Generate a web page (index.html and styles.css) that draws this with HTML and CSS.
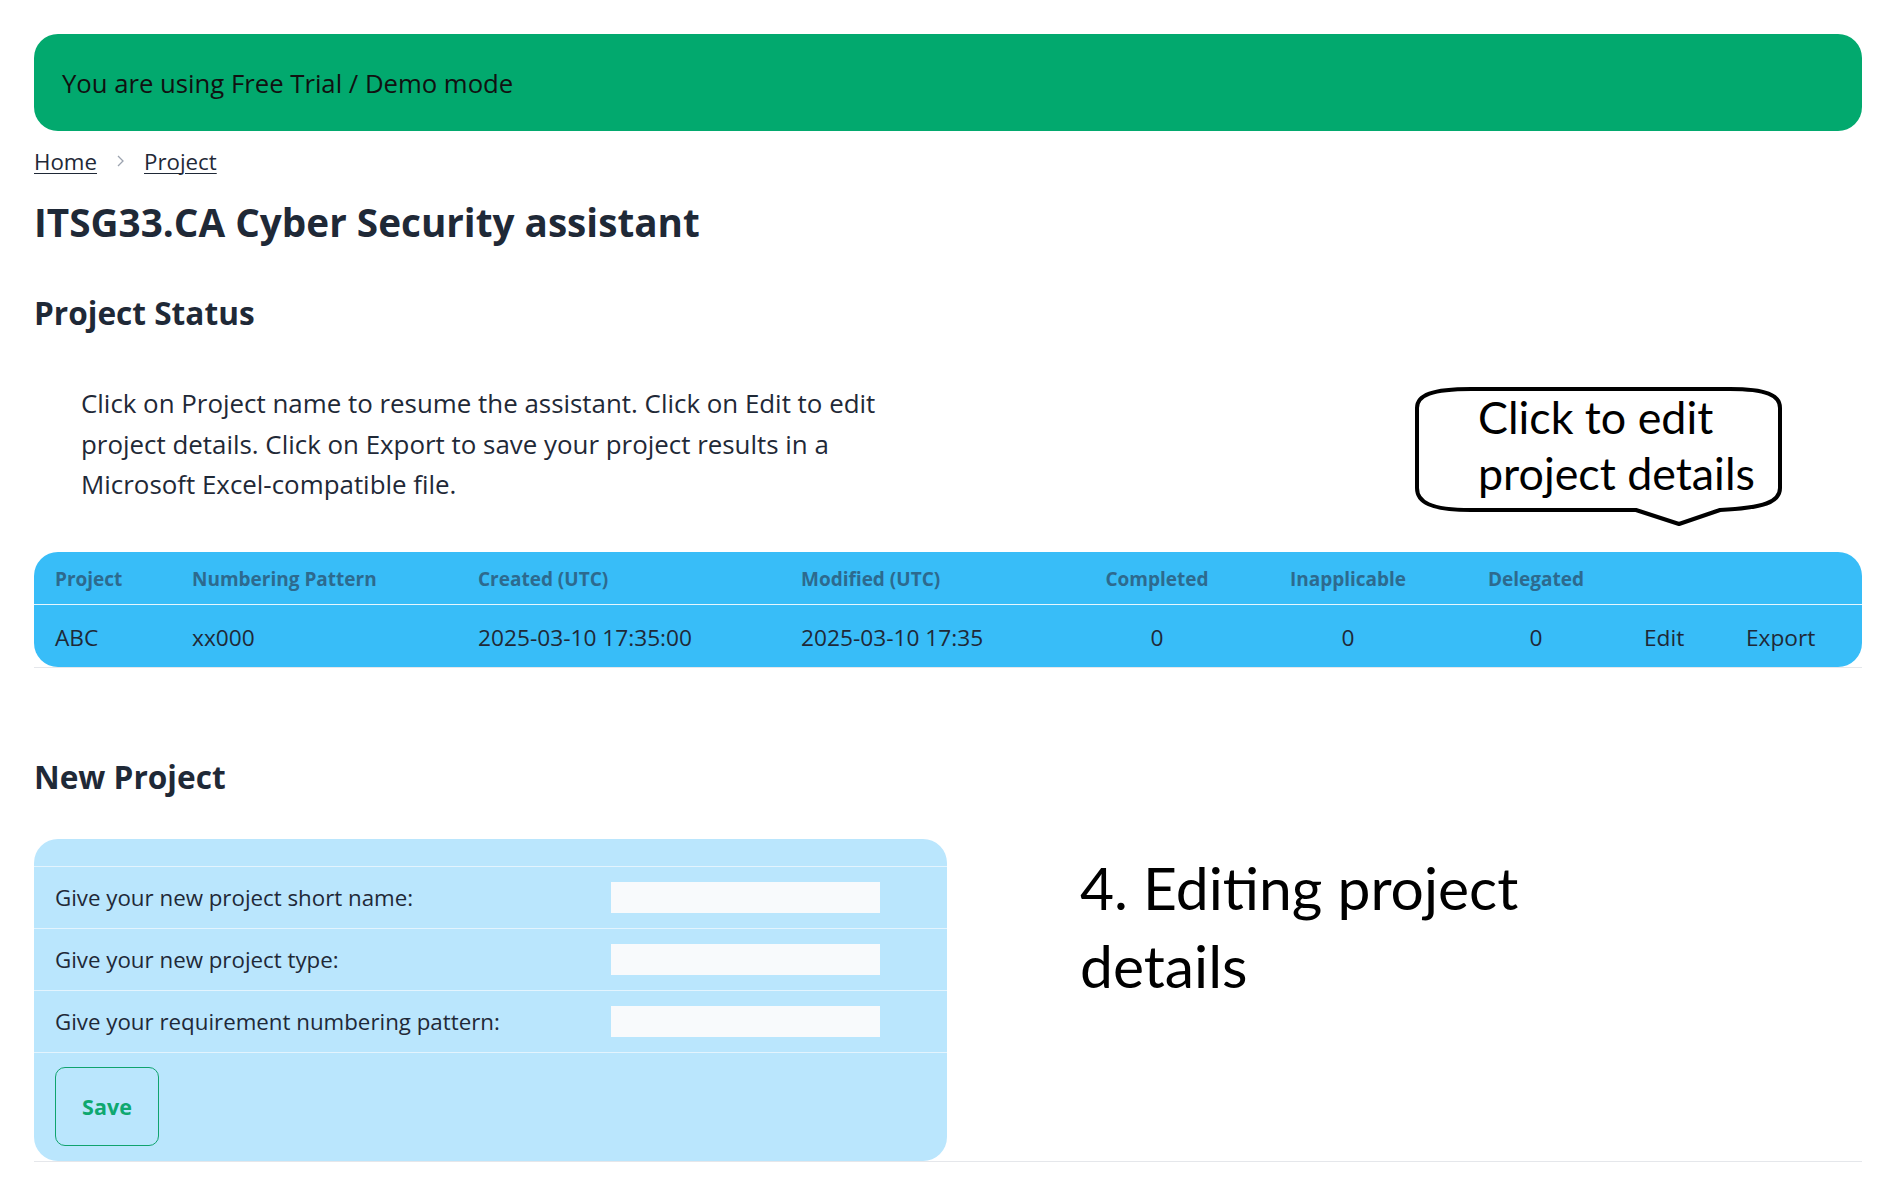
FILE: index.html
```html
<!DOCTYPE html>
<html lang="en">
<head>
<meta charset="utf-8">
<title>ITSG33.CA Cyber Security assistant</title>
<link rel="stylesheet" href="styles.css">
</head>
<body>
<div class="page">
  <div class="banner">You are using Free Trial / Demo mode</div>

  <nav class="crumbs">
    <a href="#">Home</a>
    <svg class="chev" width="10" height="14" viewBox="0 0 10 14"><path d="M3 2 L8 7 L3 12" fill="none" stroke="#9ca3af" stroke-width="1.3"/></svg>
    <a href="#">Project</a>
  </nav>

  <h1 class="title">ITSG33.CA Cyber Security assistant</h1>

  <h2 class="section-title">Project Status</h2>
  <p class="intro">Click on Project name to resume the assistant. Click on Edit to edit project details. Click on Export to save your project results in a Microsoft Excel-compatible file.</p>

  <div class="table-wrap">
    <table class="status">
      <colgroup>
        <col class="c1"><col class="c2"><col class="c3"><col class="c4"><col class="c5"><col class="c6"><col class="c7"><col class="c8"><col class="c9">
      </colgroup>
      <thead>
        <tr>
          <th>Project</th>
          <th>Numbering Pattern</th>
          <th>Created (UTC)</th>
          <th>Modified (UTC)</th>
          <th class="num">Completed</th>
          <th class="num">Inapplicable</th>
          <th class="num">Delegated</th>
          <th class="act"></th>
          <th></th>
        </tr>
      </thead>
      <tbody>
        <tr>
          <td>ABC</td>
          <td>xx000</td>
          <td>2025-03-10 17:35:00</td>
          <td>2025-03-10 17:35</td>
          <td class="num">0</td>
          <td class="num">0</td>
          <td class="num">0</td>
          <td class="act">Edit</td>
          <td>Export</td>
        </tr>
      </tbody>
    </table>
  </div>

  <h2 class="section-title new">New Project</h2>

  <div class="new-row">
    <div class="form-box">
      <div class="form-head"></div>
      <div class="form-line">
        <span class="label">Give your new project short name:</span>
        <span class="field"></span>
      </div>
      <div class="form-line">
        <span class="label">Give your new project type:</span>
        <span class="field"></span>
      </div>
      <div class="form-line">
        <span class="label">Give your requirement numbering pattern:</span>
        <span class="field"></span>
      </div>
      <div class="form-actions">
        <button class="save">Save</button>
      </div>
    </div>
    <div class="caption">4. Editing project<br>details</div>
  </div>

  <div class="bubble">
    <svg class="bubble-shape" width="370" height="142" viewBox="0 0 370 142">
      <path d="M57 3 L316 3 C352 3 366 9 366 22 L366 102 C366 116 350 122 306 124 L265 138 L222 124 L57 124 C16 124 3 116 3 102 L3 22 C3 9 18 3 57 3 Z" fill="#fff" stroke="#000" stroke-width="4" stroke-linejoin="round"/>
    </svg>
    <div class="bubble-text">Click to edit<br>project details</div>
  </div>
</div>
</body>
</html>
```

FILE: styles.css
```css
* { box-sizing: border-box; }

html, body {
  margin: 0;
  padding: 0;
  background: #ffffff;
}

body {
  font-family: "Open Sans", "Noto Sans", sans-serif;
  color: #1f2937;
}

.page {
  position: relative;
  width: 1901px;
  padding: 34px 39px 20px 34px;
}

.banner {
  height: 97px;
  background: #02a96e;
  border-radius: 24px;
  padding: 2px 28px 0 28px;
  display: flex;
  align-items: center;
  font-size: 25.7px;
  color: #111111;
}

.crumbs {
  margin-top: 15px;
  height: 30px;
  display: flex;
  align-items: center;
  font-size: 22.3px;
}

.crumbs a {
  color: #1f2937;
  text-decoration: underline;
  text-underline-offset: 3px;
  text-decoration-thickness: 1px;
}

.chev {
  margin: 0 19px 0 18px;
}

.title {
  margin: 24px 0 0 0;
  font-size: 38.7px;
  line-height: 44px;
  font-weight: 700;
  color: #1f2937;
}

.section-title {
  margin: 51px 0 0 0;
  font-size: 31.6px;
  line-height: 36px;
  font-weight: 700;
  color: #1f2937;
}

.section-title.new {
  margin-top: 91px;
}

.intro {
  margin: 52px 0 0 47px;
  max-width: 830px;
  font-size: 25.9px;
  line-height: 40.6px;
  color: #1f2937;
}

.table-wrap {
  margin-top: 47px;
  border-bottom: 1px solid #e5e7eb;
}

.status {
  width: 100%;
  table-layout: fixed;
  border-collapse: separate;
  border-spacing: 0;
  background: #38bdf8;
  border-radius: 24px;
  overflow: hidden;
}

.c1 { width: 137px; }
.c2 { width: 286px; }
.c3 { width: 323px; }
.c4 { width: 303px; }
.c5 { width: 148px; }
.c6 { width: 234px; }
.c7 { width: 142px; }
.c8 { width: 118px; }
.c9 { width: 137px; }

.status th {
  height: 53px;
  padding: 3px 0 0 21px;
  text-align: left;
  font-size: 19px;
  font-weight: 700;
  color: #2d6a8e;
  border-bottom: 1px solid #e6f6fe;
  white-space: nowrap;
}

.status td {
  height: 62px;
  padding: 3px 0 0 21px;
  text-align: left;
  font-size: 22.7px;
  color: #1f2937;
  white-space: nowrap;
}

.status .num {
  text-align: center;
  padding-left: 0;
}

.status .act {
  padding-left: 37px;
}

.new-row {
  margin-top: 44px;
  display: flex;
  align-items: flex-start;
  border-bottom: 1px solid #e5e7eb;
}

.form-box {
  width: 913px;
  background: #bae6fd;
  border-radius: 24px;
  overflow: hidden;
}

.form-head {
  height: 28px;
  border-bottom: 1px solid #e3f4fe;
}

.form-line {
  height: 62px;
  display: flex;
  align-items: center;
  border-bottom: 1px solid #e3f4fe;
  padding-left: 21px;
}

.label {
  width: 556px;
  font-size: 22.3px;
  color: #1f2937;
}

.field {
  width: 269px;
  height: 31px;
  background: #f8fafc;
}

.form-actions {
  padding: 14px 0 15px 21px;
}

.save {
  width: 104px;
  height: 79px;
  background: transparent;
  border: 1px solid #10a36e;
  border-radius: 10px;
  font-family: "Open Sans", "Noto Sans", sans-serif;
  font-size: 21.5px;
  font-weight: 700;
  color: #0ea86f;
  cursor: pointer;
}

.caption {
  margin-left: 133px;
  padding-top: 10px;
  font-family: "Lato", "Open Sans", sans-serif;
  font-size: 58.8px;
  line-height: 78px;
  color: #000000;
}

.bubble {
  position: absolute;
  left: 1414px;
  top: 386px;
  width: 370px;
  height: 142px;
}

.bubble-shape {
  position: absolute;
  left: 0;
  top: 0;
}

.bubble-text {
  position: absolute;
  left: 64px;
  top: 3px;
  font-family: "Lato", "Open Sans", sans-serif;
  font-size: 44.8px;
  line-height: 56px;
  color: #000000;
  white-space: nowrap;
}
```
